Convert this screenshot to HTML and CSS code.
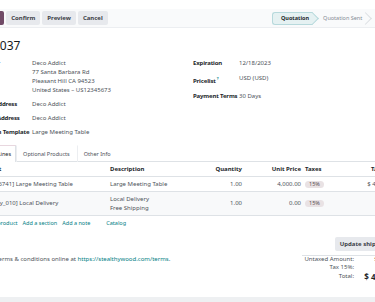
FILE: index.html
```html
<!DOCTYPE html>
<html lang="en">
<head>
<meta charset="UTF-8">
<meta name="viewport" content="width=device-width, initial-scale=1.0">
<title>S00037 - Quotation</title>
<link rel="stylesheet" href="styles.css">
</head>
<body>
    <div class="breadcrumbs"></div>
    <div class="control-panel">
        <div class="actions">
            <button class="btn btn-primary">Send by Email</button>
            <button class="btn">Confirm</button>
            <button class="btn">Preview</button>
            <button class="btn">Cancel</button>
        </div>
        <div class="statusbar">
            <span class="stage current">Quotation</span>
            <span class="stage">Quotation Sent</span>
            <span class="stage">Sales Order</span>
        </div>
    </div>

    <div class="sheet">
        <h1 class="title">S00037</h1>

        <div class="groups">
            <div class="group group-left">
                <span class="label">Customer</span>
                <div class="value">Deco Addict<br>77 Santa Barbara Rd<br>Pleasant Hill CA 94523<br>United States – US12345673</div>
                <span class="label">Invoice Address</span>
                <span class="value">Deco Addict</span>
                <span class="label">Delivery Address</span>
                <span class="value">Deco Addict</span>
                <span class="label">Quotation Template</span>
                <span class="value">Large Meeting Table</span>
            </div>
            <div class="group group-right">
                <span class="label">Expiration</span>
                <span class="value">12/18/2023</span>
                <span class="label">Pricelist<sup class="help">?</sup></span>
                <span class="value">USD (USD)</span>
                <span class="label">Payment Terms</span>
                <span class="value">30 Days</span>
            </div>
        </div>

        <div class="tabs">
            <span class="tab active">Order Lines</span>
            <span class="tab">Optional Products</span>
            <span class="tab">Other Info</span>
        </div>

        <table class="lines">
            <colgroup>
                <col class="col-product">
                <col class="col-desc">
                <col class="col-qty">
                <col class="col-price">
                <col class="col-taxes">
                <col class="col-total">
                <col class="col-trash">
            </colgroup>
            <thead>
                <tr>
                    <th class="product">Product</th>
                    <th>Description</th>
                    <th class="num">Quantity</th>
                    <th class="num">Unit Price</th>
                    <th class="taxes">Taxes</th>
                    <th class="num">Tax excl.</th>
                    <th></th>
                </tr>
            </thead>
            <tbody>
                <tr>
                    <td class="product">[FURN_6741] Large Meeting Table</td>
                    <td>Large Meeting Table</td>
                    <td class="num">1.00</td>
                    <td class="num">4,000.00</td>
                    <td class="taxes"><span class="tag">15%</span></td>
                    <td class="num">$ 4,000.00</td>
                    <td></td>
                </tr>
                <tr class="striped">
                    <td class="product">[Delivery_010] Local Delivery</td>
                    <td>Local Delivery<br>Free Shipping</td>
                    <td class="num">1.00</td>
                    <td class="num">0.00</td>
                    <td class="taxes"><span class="tag">15%</span></td>
                    <td class="num">$ 0.00</td>
                    <td></td>
                </tr>
            </tbody>
        </table>

        <div class="line-actions">
            <a href="#">Add a product</a>
            <a href="#">Add a section</a>
            <a href="#">Add a note</a>
            <a href="#" class="catalog">Catalog</a>
        </div>

        <div class="shipping">
            <button class="btn">Update shipping cost</button>
        </div>

        <div class="summary">
            <p class="terms">Our terms &amp; conditions online at <a href="#">https://stealthywood.com/terms</a>.</p>
            <table class="totals">
                <tr>
                    <td class="t-label">Untaxed Amount:</td>
                    <td class="t-value">$ 4,000.00</td>
                </tr>
                <tr>
                    <td class="t-label">Tax 15%:</td>
                    <td class="t-value">$ 600.00</td>
                </tr>
                <tr class="grand">
                    <td class="t-label">Total:</td>
                    <td class="t-value">$ 4,600.00</td>
                </tr>
            </table>
        </div>
    </div>
</body>
</html>
```

FILE: styles.css
```css
body {
    margin: 0;
    overflow: hidden;
    background-color: #eef0f2;
    font-family: "Noto Sans", "Open Sans", sans-serif;
    font-size: 6px;
    color: #4d5259;
}
a {
    color: #017e84;
    text-decoration: none;
}
.breadcrumbs {
    height: 9px;
    background-color: #fff;
}

/* control panel */
.control-panel {
    display: grid;
    grid-template-columns: 319px auto;
    align-items: center;
    width: 470px;
    height: 18px;
    margin-left: -47px;
    background-color: #f9fafb;
    border-bottom: 1px solid #eceef1;
}
.actions {
    display: flex;
    gap: 2px;
}
.btn {
    height: 14px;
    padding: 0 5px;
    border: none;
    border-radius: 2px;
    background-color: #e7e9ed;
    color: #3b4047;
    font-family: inherit;
    font-size: 6px;
    font-weight: bold;
}
.btn-primary {
    background-color: #714b67;
    color: #fff;
}
.statusbar {
    display: flex;
    font-size: 5.5px;
}
.stage {
    position: relative;
    z-index: 0;
    height: 13px;
    line-height: 13px;
    padding: 0 3.5px 0 10.5px;
    color: #868c94;
    white-space: nowrap;
}
/* chevron drawn behind the stage text */
.stage::after {
    content: '';
    position: absolute;
    top: 2px;
    right: -4.5px;
    width: 9px;
    height: 9px;
    box-sizing: border-box;
    border-top: 1px solid #dcdfe3;
    border-right: 1px solid #dcdfe3;
    transform: rotate(45deg);
    z-index: -1;
}
.stage.current {
    height: 11px;
    line-height: 11px;
    padding: 0 3.5px 0 8px;
    color: #24282d;
    font-weight: bold;
    background-color: #e5f1f2;
    border: 1px solid #b7d9dc;
    border-right: none;
    border-radius: 3px 0 0 3px;
}
.stage.current::after {
    top: 1px;
    background-color: #e5f1f2;
    border-color: #b7d9dc;
}

/* form sheet */
.sheet {
    width: 434px;
    margin-left: -22px;
    padding: 10px 0 15px;
    background-color: #fff;
}
.title {
    margin: 0;
    padding-left: 1.5px;
    font-size: 12px;
    line-height: 16px;
    font-weight: normal;
    color: #16191c;
}
.groups {
    display: grid;
    grid-template-columns: 215px 1fr;
    margin-top: 4.5px;
}
.group {
    display: grid;
    align-content: start;
    line-height: 9px;
}
.group-left {
    grid-template-columns: 60px 1fr;
    row-gap: 5px;
    margin-left: -6px;
}
.group-right {
    grid-template-columns: 46px 1fr;
    row-gap: 6px;
}
.label {
    font-weight: bold;
    color: #23272b;
    letter-spacing: -0.15px;
    white-space: nowrap;
}
.help {
    margin-left: 1px;
    font-size: 4px;
    color: #017e84;
    vertical-align: 3px;
}

/* notebook */
.tabs {
    display: flex;
    margin-top: 8.5px;
    margin-left: -5px;
    border-bottom: 1px solid #dee2e6;
    font-size: 5.5px;
}
.tab {
    height: 16px;
    line-height: 16px;
    padding: 0 6px;
    margin-bottom: -1px;
    border: 1px solid transparent;
    border-bottom: none;
    color: #4d5259;
}
.tab.active {
    padding: 0 4px 0 7px;
    background-color: #fff;
    border-color: #dee2e6;
    border-top-color: #e8d7df;
    color: #23272b;
}
.tab + .tab {
    border-left: 1px solid #eceef1;
}

/* order lines */
.lines {
    width: 434px;
    border-collapse: collapse;
    table-layout: fixed;
}
.col-product { width: 129px; }
.col-desc { width: 90px; }
.col-qty { width: 48px; }
.col-price { width: 59px; }
.col-taxes { width: 38px; }
.col-total { width: 57px; }
.col-trash { width: 13px; }
.lines th,
.lines td {
    padding: 2.5px 3px;
    line-height: 9px;
    border-bottom: 1px solid #dee2e6;
    text-align: left;
    white-space: nowrap;
    overflow: hidden;
}
.lines th {
    font-weight: bold;
    color: #23272b;
}
.lines .product {
    padding-left: 0;
}
.lines .num {
    text-align: right;
}
.lines .taxes {
    padding-left: 1px;
}
.striped td {
    background-color: #f8f9fa;
}
.tag {
    display: inline-block;
    padding: 0 4px;
    line-height: 7px;
    border-radius: 4px;
    background-color: #e9e2e4;
    color: #5b5055;
    font-size: 5.5px;
}
.line-actions {
    display: flex;
    gap: 5px;
    padding: 3px 3px 0;
    line-height: 9px;
    font-size: 5.5px;
}
.catalog {
    margin-left: 11px;
}
.shipping {
    display: flex;
    justify-content: flex-end;
    margin-top: 9px;
    padding-right: 4px;
}

/* terms and totals */
.summary {
    display: flex;
    justify-content: space-between;
    align-items: flex-start;
    margin-top: 4px;
}
.terms {
    margin: 0;
    padding-left: 6px;
    line-height: 8px;
}
.totals {
    width: 101px;
    margin-right: 9px;
    border-collapse: collapse;
    border-top: 1px solid #dee2e6;
}
.totals td {
    padding: 0;
    line-height: 7.5px;
    white-space: nowrap;
}
.t-label {
    width: 52px;
    padding-right: 2px;
    text-align: right;
}
.t-value {
    text-align: right;
    color: #23272b;
}
.grand td {
    line-height: 11px;
}
.grand .t-value {
    font-size: 8px;
    font-weight: bold;
}
```
